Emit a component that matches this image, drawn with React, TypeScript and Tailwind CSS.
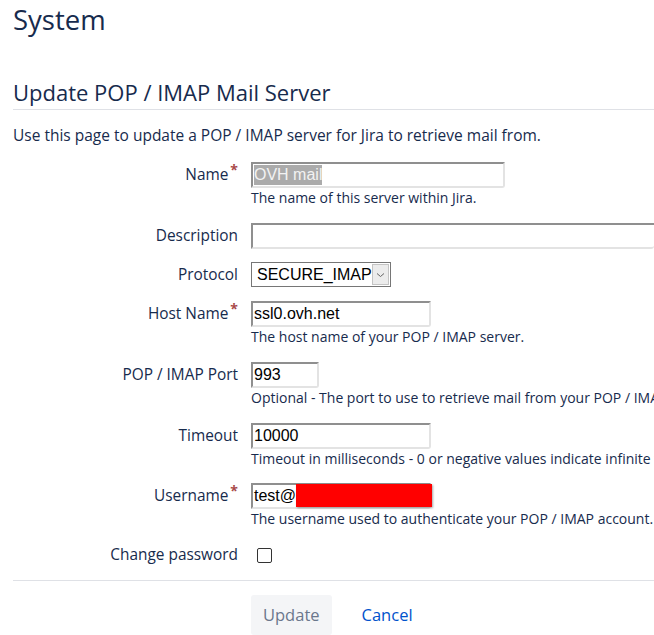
import React from "react";

const ui = { fontFamily: '"Open Sans", "Noto Sans", sans-serif' };
const arial = { fontFamily: '"Liberation Sans", Arial, sans-serif' };

const inputCls =
  "h-[26px] border-2 border-t-[#8f8f8f] border-l-[#8f8f8f] border-b-[#e3e3e3] border-r-[#e3e3e3] rounded-br-[3px] bg-white flex items-center px-[1px] text-[16px] text-black overflow-hidden whitespace-nowrap";

function Label({ text, req }: { text: string; req?: boolean }) {
  return (
    <div className="w-[238px] shrink-0 text-right text-[15.4px] text-[#172b4d] leading-[26px] pr-0 whitespace-nowrap">
      {text}
      {req && <span className="text-[#a84a4a] text-[14px] relative top-[-5px] ml-[2px] font-bold">*</span>}
    </div>
  );
}

function Help({ children }: { children: React.ReactNode }) {
  return <div className="text-[14px] leading-[20px] text-[#172b4d] whitespace-nowrap">{children}</div>;
}

export default function App() {
  return (
    <div className="w-[654px] h-[635px] bg-white overflow-hidden" style={ui}>
      <div className="pl-[13px]">
        <h1 className="text-[27.5px] leading-[34px] text-[#172b4d] pt-[3px]">System</h1>
        <h2 className="mt-[41px] text-[22px] leading-[28px] text-[#172b4d] pb-[3px] border-b border-[#dfe1e6]">
          Update POP / IMAP Mail Server
        </h2>
        <p className="mt-[15px] text-[15.5px] leading-[20px] text-[#172b4d] whitespace-nowrap">
          Use this page to update a POP / IMAP server for Jira to retrieve mail from.
        </p>
      </div>

      <div className="mt-[17px] flex flex-col">
        {/* Name */}
        <div className="flex gap-[13px] mb-[15px]">
          <Label text="Name" req />
          <div className="flex flex-col">
            <div className={inputCls + " w-[254px]"} style={arial}>
              <span className="bg-[#ababab] text-[#f2f2f2] leading-[20px]">OVH mail</span>
            </div>
            <Help>The name of this server within Jira.</Help>
          </div>
        </div>

        {/* Description */}
        <div className="flex gap-[13px] mb-[13px]">
          <Label text="Description" />
          <div className={inputCls + " w-[420px] border-r-0 rounded-none"} style={arial}></div>
        </div>

        {/* Protocol */}
        <div className="flex gap-[13px] mb-[13px]">
          <Label text="Protocol" />
          <div
            className="h-[25px] w-[140px] border border-[#767676] bg-white flex items-center text-[16px] text-black"
            style={arial}
          >
            <span className="pl-[5px] flex-1">SECURE_IMAP</span>
            <span className="mr-[1px] w-[19px] h-[21px] bg-[#ececec] border border-[#c4c4c4] flex items-center justify-center">
              <svg width="9" height="6" viewBox="0 0 9 6" fill="none">
                <path d="M1 1.5 L4.5 4.5 L8 1.5" stroke="#666" strokeWidth="1" />
              </svg>
            </span>
          </div>
        </div>

        {/* Host Name */}
        <div className="flex gap-[13px] mb-[15px]">
          <Label text="Host Name" req />
          <div className="flex flex-col">
            <div className={inputCls + " w-[180px]"} style={arial}>ssl0.ovh.net</div>
            <Help>The host name of your POP / IMAP server.</Help>
          </div>
        </div>

        {/* Port */}
        <div className="flex gap-[13px] mb-[15px]">
          <Label text="POP / IMAP Port" />
          <div className="flex flex-col">
            <div className={inputCls + " w-[68px]"} style={arial}>993</div>
            <Help>Optional - The port to use to retrieve mail from your POP / IMAP server.</Help>
          </div>
        </div>

        {/* Timeout */}
        <div className="flex gap-[13px] mb-[14px]">
          <Label text="Timeout" />
          <div className="flex flex-col">
            <div className={inputCls + " w-[180px]"} style={arial}>10000</div>
            <Help>Timeout in milliseconds - 0 or negative values indicate infinite wait.</Help>
          </div>
        </div>

        {/* Username */}
        <div className="flex gap-[13px] mb-[13px]">
          <Label text="Username" req />
          <div className="flex flex-col">
            <div className="relative w-[180px]">
              <div className={inputCls + " w-[180px]"} style={arial}>test@</div>
              <div className="absolute left-[45px] top-[1px] w-[136px] h-[23px] bg-[#ff0000] shadow-[1px_1px_2px_rgba(0,0,0,0.35)]"></div>
            </div>
            <Help>The username used to authenticate your POP / IMAP account.</Help>
          </div>
        </div>

        {/* Change password */}
        <div className="flex gap-[13px] items-center">
          <Label text="Change password" />
          <div className="w-[15px] h-[15px] ml-[6px] border border-[#333] rounded-[2px] bg-white"></div>
        </div>
      </div>

      <div className="ml-[13px] mt-[12px] border-t border-[#dfe1e6]"></div>

      <div className="mt-[14px] pl-[251px] flex items-center gap-[30px]">
        <div className="h-[40px] px-[12px] rounded-[3px] bg-[#f4f5f7] text-[#6b778c] text-[16.5px] flex items-center">
          Update
        </div>
        <div className="text-[#0052cc] text-[16.5px]">Cancel</div>
      </div>
    </div>
  );
}
